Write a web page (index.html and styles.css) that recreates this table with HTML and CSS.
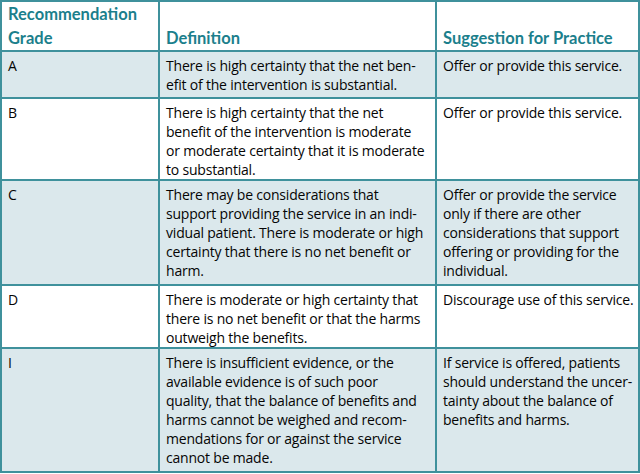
FILE: index.html
```html
<!DOCTYPE html>
<html lang="en">
<head>
<meta charset="utf-8">
<title>Recommendation Grades</title>
<link rel="stylesheet" href="styles.css">
</head>
<body>
<table class="grades">
  <colgroup>
    <col class="c-grade">
    <col class="c-def">
    <col class="c-sug">
  </colgroup>
  <thead>
    <tr class="r-head">
      <th>Recommendation<br>Grade</th>
      <th>Definition</th>
      <th>Suggestion for Practice</th>
    </tr>
  </thead>
  <tbody>
    <tr class="r-a shade">
      <td>A</td>
      <td>There is high certainty that the net ben-<br>efit of the intervention is substantial.</td>
      <td>Offer or provide this service.</td>
    </tr>
    <tr class="r-b">
      <td>B</td>
      <td>There is high certainty that the net<br>benefit of the intervention is moderate<br>or moderate certainty that it is moderate<br>to substantial.</td>
      <td>Offer or provide this service.</td>
    </tr>
    <tr class="r-c shade">
      <td>C</td>
      <td>There may be considerations that<br>support providing the service in an indi-<br>vidual patient. There is moderate or high<br>certainty that there is no net benefit or<br>harm.</td>
      <td>Offer or provide the service<br>only if there are other<br>considerations that support<br>offering or providing for the<br>individual.</td>
    </tr>
    <tr class="r-d">
      <td>D</td>
      <td>There is moderate or high certainty that<br>there is no net benefit or that the harms<br>outweigh the benefits.</td>
      <td>Discourage use of this service.</td>
    </tr>
    <tr class="r-i shade">
      <td>I</td>
      <td>There is insufficient evidence, or the<br>available evidence is of such poor<br>quality, that the balance of benefits and<br>harms cannot be weighed and recom-<br>mendations for or against the service<br>cannot be made.</td>
      <td>If service is offered, patients<br>should understand the uncer-<br>tainty about the balance of<br>benefits and harms.</td>
    </tr>
  </tbody>
</table>
</body>
</html>
```
FILE: styles.css
```css
html, body {
  margin: 0;
  padding: 0;
  background: #ffffff;
}

.grades {
  border-collapse: collapse;
  table-layout: fixed;
  width: 638px;
  font-family: "Open Sans", Lato, sans-serif;
  color: #050505;
}

.c-grade { width: 158px; }
.c-def { width: 277px; }
.c-sug { width: 203px; }

.grades th,
.grades td {
  border: 2px solid #3f919c;
  padding: 0 2px 0 6px;
  text-align: left;
  white-space: nowrap;
}

.grades th {
  vertical-align: bottom;
  font-family: Lato, "Open Sans", sans-serif;
  font-weight: 700;
  font-size: 16.5px;
  line-height: 24px;
  color: #1b7f8c;
  padding-bottom: 0;
}

.grades td {
  vertical-align: top;
  font-size: 14px;
  font-weight: 500;
  line-height: 19px;
  padding-top: 4px;
  letter-spacing: -0.2px;
}

.shade td { background: #dbe8ec; }

.r-head { height: 50px; }
.r-a { height: 47px; }
.r-b { height: 81px; }
.r-c { height: 105px; }
.r-d { height: 63px; }
.r-i { height: 124px; }
```
